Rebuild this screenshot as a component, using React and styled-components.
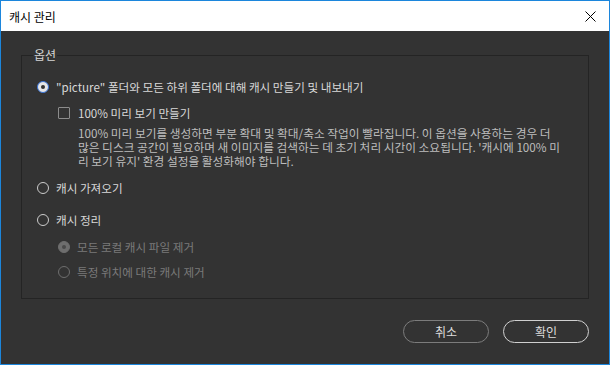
import React from "react";
import styled, { createGlobalStyle } from "styled-components";

const Global = createGlobalStyle`
  html, body { margin: 0; padding: 0; background: #333333; }
  body { font-family: "Noto Sans CJK KR", "Noto Sans", sans-serif; }
  * { box-sizing: border-box; }
`;

const Window = styled.div`
  width: 610px;
  height: 365px;
  border: 1px solid #1c86dc;
  display: flex;
  flex-direction: column;
  background: #333333;
`;

const TitleBar = styled.div`
  height: 30px;
  background: #ffffff;
  display: flex;
  align-items: center;
  justify-content: space-between;
  padding: 0 10px 0 8px;
  font-size: 12px;
  color: #000;
`;

const CloseIcon = styled.svg`
  width: 11px;
  height: 11px;
  margin-right: 3px;
`;

const Body = styled.div`
  flex: 1;
  display: flex;
  flex-direction: column;
  padding: 24px 20px 21px 20px;
`;

const Group = styled.div`
  position: relative;
  height: 244px;
  border: 1px solid #242424;
  padding: 23px 0 0 15px;
  display: flex;
  flex-direction: column;
`;

const Legend = styled.span`
  position: absolute;
  left: 11px;
  top: -9px;
  padding: 0 1px;
  background: #333333;
  color: #d6d6d6;
  font-size: 12px;
  line-height: 16px;
`;

const Row = styled.div`
  display: flex;
  align-items: center;
  height: 16px;
  margin-top: ${(p) => p.$gap || 0}px;
  padding-left: ${(p) => p.$indent || 0}px;
  font-size: 11.6px;
  color: ${(p) => (p.$disabled ? "#7a7a7a" : "#d8d8d8")};
  white-space: nowrap;
`;

const Radio = styled.span`
  width: 12px;
  height: 12px;
  border-radius: 50%;
  flex: none;
  margin-right: 7px;
  position: relative;
  border: 1.5px solid
    ${(p) => (p.$checked && !p.$disabled ? "#3a74d8" : p.$disabled ? "#6e6e6e" : "#cccccc")};
  background: ${(p) =>
    p.$checked ? (p.$disabled ? "#6e6e6e" : "#e6e6e6") : "transparent"};
  &::after {
    content: "";
    display: ${(p) => (p.$checked ? "block" : "none")};
    position: absolute;
    left: 50%;
    top: 50%;
    width: 4px;
    height: 4px;
    margin: -2px 0 0 -2px;
    border-radius: 50%;
    background: ${(p) => (p.$disabled ? "#4a4a4a" : "#333333")};
  }
`;

const Check = styled.span`
  width: 12px;
  height: 12px;
  flex: none;
  border: 1px solid #8c8c8c;
  border-radius: 1px;
  margin-right: 8px;
`;

const Desc = styled.div`
  margin-top: 5px;
  padding-left: 41px;
  font-size: 11.7px;
  line-height: 14px;
  color: #bdbdbd;
  white-space: nowrap;
`;

const Footer = styled.div`
  display: flex;
  justify-content: flex-end;
  gap: 14px;
  margin-top: auto;
`;

const Button = styled.button`
  width: 86px;
  height: 23px;
  border-radius: 12px;
  background: transparent;
  border: 1.5px solid ${(p) => (p.$primary ? "#d0d0d0" : "#7c7c7c")};
  color: #dcdcdc;
  font-family: inherit;
  font-size: 12px;
  padding: 0;
  line-height: 20px;
`;

export default function App() {
  return (
    <>
      <Global />
      <Window>
        <TitleBar>
          <span>캐시 관리</span>
          <CloseIcon viewBox="0 0 11 11">
            <path d="M0.5 0.5 L10.5 10.5 M10.5 0.5 L0.5 10.5" stroke="#000" strokeWidth="1" fill="none" />
          </CloseIcon>
        </TitleBar>
        <Body>
          <Group>
            <Legend>옵션</Legend>
            <Row>
              <Radio $checked />
              "picture" 폴더와 모든 하위 폴더에 대해 캐시 만들기 및 내보내기
            </Row>
            <Row $gap={10} $indent={21}>
              <Check />
              100% 미리 보기 만들기
            </Row>
            <Desc>
              100% 미리 보기를 생성하면 부분 확대 및 확대/축소 작업이 빨라집니다. 이 옵션을 사용하는 경우 더
              <br />
              많은 디스크 공간이 필요하며 새 이미지를 검색하는 데 초기 처리 시간이 소요됩니다. '캐시에 100% 미
              <br />
              리 보기 유지' 환경 설정을 활성화해야 합니다.
            </Desc>
            <Row $gap={12}>
              <Radio />
              캐시 가져오기
            </Row>
            <Row $gap={16}>
              <Radio />
              캐시 정리
            </Row>
            <Row $gap={11} $indent={21} $disabled>
              <Radio $checked $disabled />
              모든 로컬 캐시 파일 제거
            </Row>
            <Row $gap={9} $indent={21} $disabled>
              <Radio $disabled />
              특정 위치에 대한 캐시 제거
            </Row>
          </Group>
          <Footer>
            <Button>취소</Button>
            <Button $primary>확인</Button>
          </Footer>
        </Body>
      </Window>
    </>
  );
}
